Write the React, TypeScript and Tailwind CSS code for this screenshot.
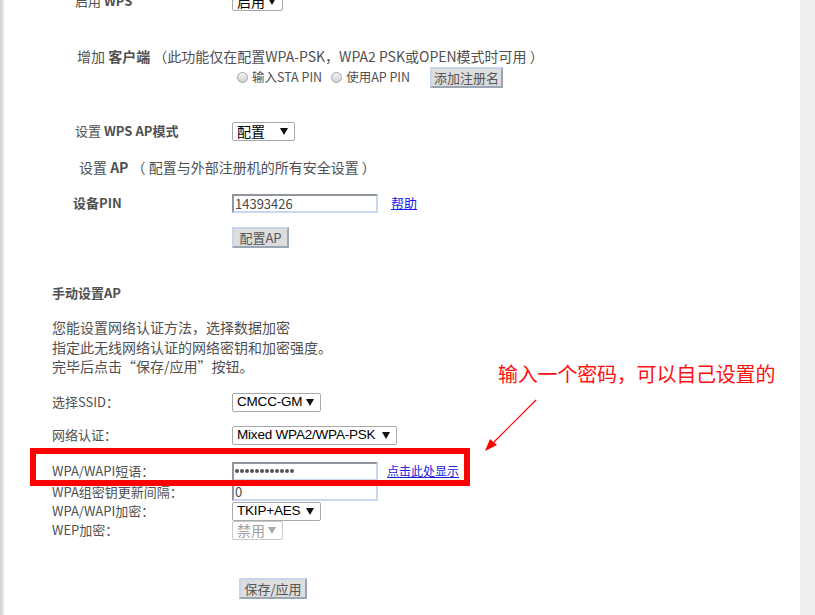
import React from "react";

const F = { fontFamily: '"Noto Sans CJK SC", "Noto Sans", sans-serif' };
const A = { fontFamily: '"Liberation Sans", Arial, "Noto Sans CJK SC", sans-serif' };

function Arrow({ gray }: { gray?: boolean }) {
  return (
    <svg width="8" height="7" viewBox="0 0 8 7" className="shrink-0">
      <path d="M0 0 L8 0 L4 7 Z" fill={gray ? "#a8a8a8" : "#111"} />
    </svg>
  );
}

function Sel({ w, text, disabled, cjk }: { w: string; text: string; disabled?: boolean; cjk?: boolean }) {
  return (
    <div
      className={`flex h-[19px] items-center justify-between rounded-[2px] border bg-white pl-[4px] pr-[6px] leading-none ${w} ${
        cjk ? "text-[14px]" : "text-[13.5px] tracking-[-0.2px]"
      } ${disabled ? "border-[#c9c9c9] text-[#a0a0a0]" : "border-[#a9a9a9] text-black"}`}
      style={cjk ? F : A}
    >
      <span>{text}</span>
      <Arrow gray={disabled} />
    </div>
  );
}

function Input({ value, dots }: { value: string; dots?: boolean }) {
  return (
    <div className="flex h-[19px] w-[146px] items-center border-b-2 border-l-2 border-r-2 border-t-2 border-b-[#c9d8ee] border-l-[#8f969f] border-r-[#c9d8ee] border-t-[#8f969f] bg-white pl-[1px] text-[13px] leading-none text-[#4a4a4a]">
      {dots ? (
        <span className="flex gap-[1px]">
          {Array.from({ length: 12 }).map((_, i) => (
            <span key={i} className="inline-block h-[4px] w-[4px] rounded-full bg-[#555]" />
          ))}
        </span>
      ) : (
        <span>{value}</span>
      )}
    </div>
  );
}

function Btn({ w, text }: { w: string; text: string }) {
  return (
    <div
      className={`flex h-[21px] items-center justify-center border-2 border-b-[#9aa6b6] border-l-[#c8d6ec] border-r-[#9aa6b6] border-t-[#c8d6ec] bg-[#dddddd] text-[13px] leading-none text-[#555] ${w}`}
    >
      {text}
    </div>
  );
}

function Radio() {
  return <span className="inline-block h-[11px] w-[11px] rounded-full border border-[#a3a3a3] bg-gradient-to-b from-[#f4f4f4] to-[#d2d2d2]" />;
}

export default function App() {
  return (
    <div className="flex h-[615px] w-[815px] overflow-hidden text-[#505050]" style={F}>
      <div className="w-[4px] shrink-0 bg-gradient-to-r from-[#d2d2d2] to-[#ededed]" />
      <div className="relative h-[615px] w-[796px] shrink-0 overflow-hidden bg-white">
        <div className="flex flex-col text-[13px]">
          {/* 启用 WPS */}
          <div className="-mt-[10px] flex h-[22px] items-center">
            <div className="w-[228px] pl-[71px]">
              启用 <b>WPS</b>
            </div>
            <Sel w="w-[51px]" text="启用" cjk />
          </div>
          {/* 增加 客户端 */}
          <div className="mt-[34px] flex h-[20px] items-center pl-[73px] text-[14px]">
            增加&nbsp;<b>客户端</b>&nbsp;（此功能仅在配置WPA-PSK，WPA2 PSK或OPEN模式时可用 ）
          </div>
          <div className="mt-[1px] flex h-[21px] items-center pl-[233px] text-[12.5px]">
            <Radio />
            <span className="ml-[4px]">输入STA PIN</span>
            <span className="ml-[9px]" />
            <Radio />
            <span className="ml-[4px]">使用AP PIN</span>
            <div className="ml-[20px]">
              <Btn w="w-[73px]" text="添加注册名" />
            </div>
          </div>
          {/* 设置 WPS AP模式 */}
          <div className="mt-[33px] flex h-[20px] items-center">
            <div className="w-[228px] pl-[71px]">
              设置 <b>WPS AP模式</b>
            </div>
            <Sel w="w-[63px]" text="配置" cjk />
          </div>
          <div className="mt-[16px] flex h-[20px] items-center pl-[75px] text-[14px]">
            设置&nbsp;<b>AP</b>&nbsp;（ 配置与外部注册机的所有安全设置 ）
          </div>
          <div className="mt-[16px] flex h-[20px] items-center">
            <div className="w-[228px] pl-[69px] font-bold">设备PIN</div>
            <Input value="14393426" />
            <a className="ml-[13px] text-[13px] text-[#1a1aee] underline">帮助</a>
          </div>
          <div className="mt-[14px] flex h-[21px] items-center pl-[228px]">
            <Btn w="w-[57px]" text="配置AP" />
          </div>
          {/* 手动设置AP */}
          <div className="mt-[35px] flex h-[20px] items-center pl-[48px] font-bold">手动设置AP</div>
          <div className="mt-[15px] pl-[48px] text-[14px] leading-[19.5px]">
            <div>您能设置网络认证方法，选择数据加密</div>
            <div>指定此无线网络认证的网络密钥和加密强度。</div>
            <div>完毕后点击“保存/应用”按钮。</div>
          </div>
          <div className="mt-[16px] flex h-[19px] items-center">
            <div className="w-[228px] pl-[48px]">选择SSID：</div>
            <Sel w="w-[89px]" text="CMCC-GM" />
          </div>
          <div className="mt-[14px] flex h-[19px] items-center">
            <div className="w-[228px] pl-[48px]">网络认证：</div>
            <Sel w="w-[165px]" text="Mixed WPA2/WPA-PSK" />
          </div>
          <div className="mt-[17px] flex h-[19px] items-center">
            <div className="w-[228px] pl-[48px]">WPA/WAPI短语：</div>
            <Input value="" dots />
            <a className="ml-[9px] text-[12px] text-[#2222dd] underline">点击此处显示</a>
          </div>
          <div className="mt-[2px] flex h-[18px] items-center">
            <div className="w-[228px] pl-[48px]">WPA组密钥更新间隔：</div>
            <Input value="0" />
          </div>
          <div className="mt-[1px] flex h-[19px] items-center">
            <div className="w-[228px] pl-[48px]">WPA/WAPI加密：</div>
            <Sel w="w-[89px]" text="TKIP+AES" />
          </div>
          <div className="mt-[0px] flex h-[19px] items-center">
            <div className="w-[228px] pl-[48px]">WEP加密：</div>
            <Sel w="w-[51px]" text="禁用" disabled cjk />
          </div>
          <div className="mt-[38px] flex h-[21px] items-center pl-[235px]">
            <Btn w="w-[68px]" text="保存/应用" />
          </div>
        </div>

        {/* annotations */}
        <div className="absolute left-[26px] top-[448px] h-[38px] w-[440px] border-[6px] border-[#ff0000]" />
        <div className="absolute left-[494px] top-[362px] text-[20px] leading-[24px] tracking-[-0.2px] text-[#ff1010]" style={F}>
          输入一个密码，可以自己设置的
        </div>
        <svg className="absolute left-[476px] top-[396px]" width="62" height="60" viewBox="0 0 62 60">
          <line x1="56" y1="4" x2="14" y2="46" stroke="#ff0000" strokeWidth="1.2" />
          <path d="M5 55 L10 43 L17 49 Z" fill="#ff0000" />
        </svg>
      </div>
      <div className="w-[15px] shrink-0 bg-[#eeefee]" />
    </div>
  );
}
